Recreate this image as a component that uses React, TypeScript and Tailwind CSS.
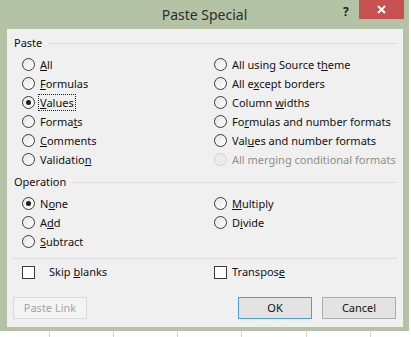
import type { ReactNode } from 'react';

const font = "font-['Noto_Sans',sans-serif]";

function Radio({ label, checked, disabled, focus }: { label: ReactNode; checked?: boolean; disabled?: boolean; focus?: boolean }) {
  return (
    <div className="flex items-center h-[19px]">
      <span
        className={`w-[13px] h-[13px] rounded-full border flex items-center justify-center shrink-0 ${
          disabled ? 'border-[#cfcfcf] bg-[#ececec]' : 'border-[#3a3a3a] bg-linear-to-br from-[#e4e4e4] to-white'
        }`}
      >
        {checked && <span className="w-[5px] h-[5px] rounded-full bg-[#1c1c1c]" />}
      </span>
      <span
        className={`ml-[4px] leading-[15px] px-[1px] ${disabled ? 'text-[#8e8e8e]' : 'text-[#111]'} ${
          focus ? 'outline outline-1 outline-dotted outline-[#222]' : ''
        }`}
      >
        {label}
      </span>
    </div>
  );
}

function Check({ label, gap }: { label: ReactNode; gap: string }) {
  return (
    <div className="flex items-center h-[19px]">
      <span className="w-[13px] h-[13px] border border-[#3a3a3a] bg-white shrink-0" />
      <span className={`${gap} text-[#111]`}>{label}</span>
    </div>
  );
}

function Header({ title }: { title: string }) {
  return (
    <div className="flex items-center h-[16px] px-[6px]">
      <span className="pl-[1px] text-[#111]">{title}</span>
      <span className="flex-1 h-px bg-[#dcdcdc] ml-[6px]" />
    </div>
  );
}

const U = ({ c }: { c: string }) => <span className="underline underline-offset-[1px]">{c}</span>;

export default function App() {
  return (
    <div className={`w-[411px] h-[337px] bg-white overflow-hidden ${font} text-[11px]`}>
      <div className="w-[409px] h-[331px] bg-[#b4c3a5] flex flex-col">
        {/* title bar */}
        <div className="relative h-[29px] flex items-start justify-center">
          <span className="mt-[4px] text-[14px] text-[#2e2e2e]">Paste Special</span>
          <span className="absolute left-[343px] top-[3px] text-[12px] font-bold text-[#222]">?</span>
          <div className="absolute left-[359px] top-0 w-[45px] h-[19px] bg-[#c75050] flex items-center justify-center">
            <svg width="9" height="9" viewBox="0 0 9 9">
              <path d="M1 1 L8 8 M8 1 L1 8" stroke="white" strokeWidth="2" />
            </svg>
          </div>
        </div>

        {/* client area */}
        <div className="ml-[7px] mr-[6px] h-[298px] bg-[#f0f0f0] flex flex-col pt-[6px]">
          <Header title="Paste" />
          <div className="mt-[4px] pl-[15px] grid grid-cols-[192px_1fr]">
            <div className="flex flex-col">
              <Radio label={<><U c="A" />ll</>} />
              <Radio label={<><U c="F" />ormulas</>} />
              <Radio label={<><U c="V" />alues</>} checked focus />
              <Radio label={<>Forma<U c="t" />s</>} />
              <Radio label={<><U c="C" />omments</>} />
              <Radio label={<>Validatio<U c="n" /></>} />
            </div>
            <div className="flex flex-col">
              <Radio label={<>All using Source t<U c="h" />eme</>} />
              <Radio label={<>All e<U c="x" />cept borders</>} />
              <Radio label={<>Column <U c="w" />idths</>} />
              <Radio label={<>Fo<U c="r" />mulas and number formats</>} />
              <Radio label={<>Val<U c="u" />es and number formats</>} />
              <Radio label="All merging conditional formats" disabled />
            </div>
          </div>

          <div className="mt-[5px]">
            <Header title="Operation" />
          </div>
          <div className="mt-[4px] pl-[15px] grid grid-cols-[192px_1fr]">
            <div className="flex flex-col">
              <Radio label={<>N<U c="o" />ne</>} checked />
              <Radio label={<>A<U c="d" />d</>} />
              <Radio label={<><U c="S" />ubtract</>} />
            </div>
            <div className="flex flex-col">
              <Radio label={<><U c="M" />ultiply</>} />
              <Radio label={<>D<U c="i" />vide</>} />
            </div>
          </div>

          <div className="mt-[7px] mx-[6px] h-px bg-[#dcdcdc]" />

          <div className="mt-[4px] pl-[15px] grid grid-cols-[192px_1fr]">
            <Check label={<>Skip <U c="b" />lanks</>} gap="ml-[14px]" />
            <Check label={<>Transpos<U c="e" /></>} gap="ml-[5px]" />
          </div>

          <div className="mt-[15px] flex pl-[6px] pr-[7px]">
            <div className="w-[74px] h-[22px] border border-[#d9d9d9] bg-[#f4f4f4] text-[#a3a3a3] flex items-center justify-center">
              Paste Link
            </div>
            <div className="flex-1" />
            <div className="w-[74px] h-[22px] border border-[#4f9ad8] bg-[#e3e3e3] text-[#111] flex items-center justify-center">
              OK
            </div>
            <div className="ml-[10px] w-[74px] h-[22px] border border-[#adadad] bg-[#e3e3e3] text-[#111] flex items-center justify-center">
              Cancel
            </div>
          </div>
        </div>
      </div>

      {/* worksheet grid behind the dialog */}
      <div className="flex h-[6px]">
        <div className="w-[50px] border-r border-[#d4d4d4]" />
        <div className="w-[64px] border-r border-[#d4d4d4]" />
        <div className="w-[64px] border-r border-[#d4d4d4]" />
        <div className="w-[64px] border-r border-[#d4d4d4]" />
        <div className="w-[65px] border-r border-[#d4d4d4]" />
        <div className="w-[64px] border-r border-[#d4d4d4]" />
      </div>
    </div>
  );
}
